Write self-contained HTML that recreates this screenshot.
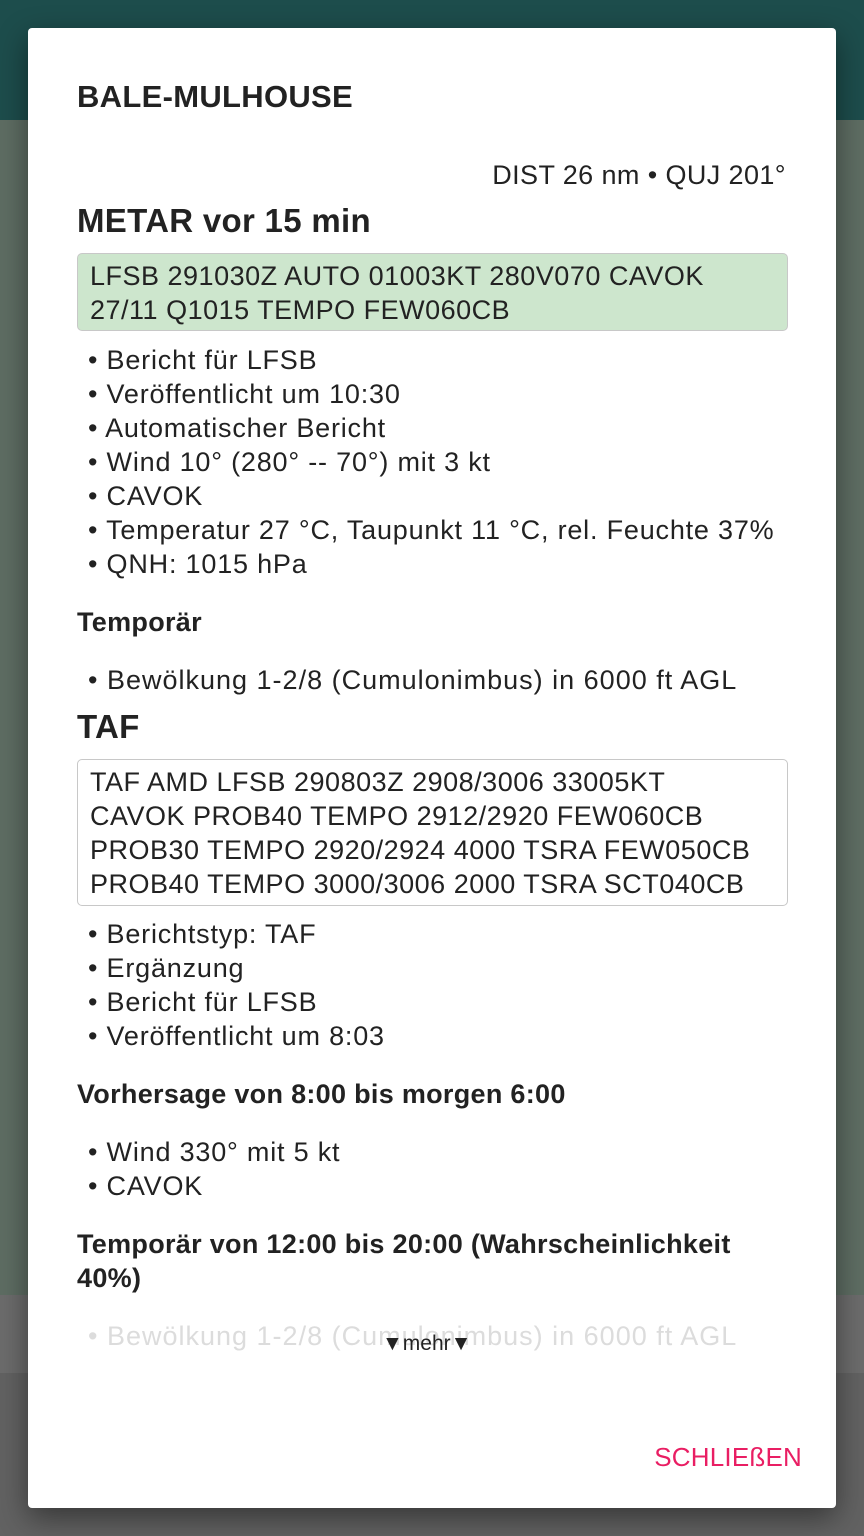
<!DOCTYPE html>
<html><head><meta charset="utf-8"><style>
html,body{margin:0;padding:0;width:864px;height:1536px;overflow:hidden;font-family:"Liberation Sans",sans-serif;}
body{background:#5f6b62;position:relative;}
.top{position:absolute;left:0;top:0;width:864px;height:120px;background:#1d4d4c;}
.mid{position:absolute;left:0;top:120px;width:864px;height:1175px;background:#5e6d63;}
.bot{position:absolute;left:0;top:1295px;width:864px;height:241px;background:#626262;}
.bot2{position:absolute;left:0;top:1295px;width:864px;height:78px;background:#6c6c6c;}
.dlg{position:absolute;left:28px;top:28px;width:808px;height:1480px;background:#fff;border-radius:4px;box-shadow:0 10px 30px rgba(0,0,0,.45);}
.l{position:absolute;left:77px;height:34px;line-height:34px;font-size:27px;letter-spacing:0.8px;color:#222;white-space:nowrap;}
.b{font-weight:bold;letter-spacing:0.3px;}
.m{letter-spacing:0.5px;}
.box{position:absolute;left:77px;width:709px;border:1px solid #c8c8c8;border-radius:5px;}
</style></head><body>
<div class="top"></div><div class="mid"></div><div class="bot"></div><div class="bot2"></div>
<div class="dlg"></div>
<div class="l b" style="top:80px;font-size:31px;">BALE-MULHOUSE</div>
<div class="l" style="top:158px;left:auto;right:78px;letter-spacing:0.4px;">DIST 26 nm • QUJ 201°</div>
<div class="l b" style="top:204px;font-size:33px;">METAR vor 15 min</div>
<div class="box" style="top:253px;height:76px;background:#cde6cd;"></div>
<div class="l m" style="top:259px;left:90px;">LFSB 291030Z AUTO 01003KT 280V070 CAVOK</div>
<div class="l m" style="top:293px;left:90px;">27/11 Q1015 TEMPO FEW060CB</div>
<div class="l" style="top:343px;left:88px;">• Bericht für LFSB</div>
<div class="l" style="top:377px;left:88px;">• Veröffentlicht um 10:30</div>
<div class="l" style="top:411px;left:88px;">• Automatischer Bericht</div>
<div class="l" style="top:445px;left:88px;">• Wind 10° (280° -- 70°) mit 3 kt</div>
<div class="l" style="top:479px;left:88px;">• CAVOK</div>
<div class="l" style="top:513px;left:88px;">• Temperatur 27 °C, Taupunkt 11 °C, rel. Feuchte 37%</div>
<div class="l" style="top:547px;left:88px;">• QNH: 1015 hPa</div>
<div class="l b" style="top:605px;">Temporär</div>
<div class="l" style="top:663px;left:88px;letter-spacing:1px;">• Bewölkung 1-2/8 (Cumulonimbus) in 6000 ft AGL</div>
<div class="l b" style="top:710px;font-size:33px;">TAF</div>
<div class="box" style="top:759px;height:145px;"></div>
<div class="l m" style="top:765px;left:90px;">TAF AMD LFSB 290803Z 2908/3006 33005KT</div>
<div class="l m" style="top:799px;left:90px;">CAVOK PROB40 TEMPO 2912/2920 FEW060CB</div>
<div class="l m" style="top:833px;left:90px;">PROB30 TEMPO 2920/2924 4000 TSRA FEW050CB</div>
<div class="l m" style="top:867px;left:90px;">PROB40 TEMPO 3000/3006 2000 TSRA SCT040CB</div>
<div class="l" style="top:917px;left:88px;">• Berichtstyp: TAF</div>
<div class="l" style="top:951px;left:88px;">• Ergänzung</div>
<div class="l" style="top:985px;left:88px;">• Bericht für LFSB</div>
<div class="l" style="top:1019px;left:88px;">• Veröffentlicht um 8:03</div>
<div class="l b" style="top:1077px;">Vorhersage von 8:00 bis morgen 6:00</div>
<div class="l" style="top:1135px;left:88px;">• Wind 330° mit 5 kt</div>
<div class="l" style="top:1169px;left:88px;">• CAVOK</div>
<div class="l b" style="top:1227px;">Temporär von 12:00 bis 20:00 (Wahrscheinlichkeit</div>
<div class="l b" style="top:1261px;">40%)</div>
<div class="l" style="top:1319px;left:88px;color:#dcdcdc;letter-spacing:1px;">• Bewölkung 1-2/8 (Cumulonimbus) in 6000 ft AGL</div>
<div class="l" style="top:1327px;left:382px;font-size:21px;letter-spacing:0;color:#222;">▼mehr▼</div>
<div class="l" style="top:1440px;left:auto;right:62px;color:#e91e63;font-size:26px;letter-spacing:0.2px;">SCHLIEßEN</div>
</body></html>
